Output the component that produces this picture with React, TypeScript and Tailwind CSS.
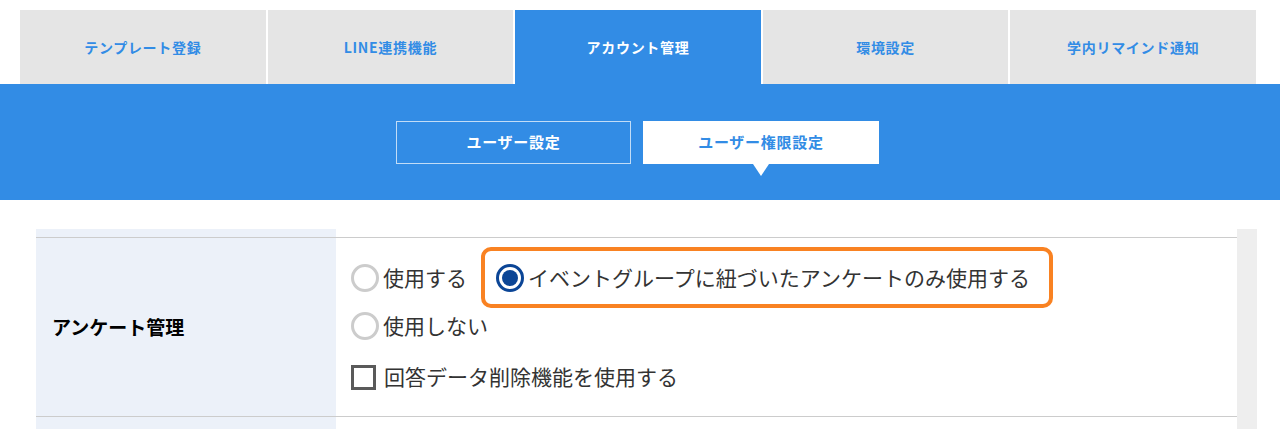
const TABS = ["テンプレート登録", "LINE連携機能", "アカウント管理", "環境設定", "学内リマインド通知"];
const ACTIVE_TAB = 2;

function Radio({ checked }: { checked?: boolean }) {
  if (checked) {
    return (
      <span className="flex h-[28px] w-[28px] shrink-0 items-center justify-center rounded-full border-[3px] border-[#0b4596] bg-white">
        <span className="h-[16px] w-[16px] rounded-full bg-[#0b4596]" />
      </span>
    );
  }
  return <span className="h-[28px] w-[28px] shrink-0 rounded-full border-[3px] border-[#cccccc] bg-white" />;
}

export default function App() {
  return (
    <div
      className="h-[444px] w-[1280px] overflow-hidden bg-white"
      style={{ fontFamily: '"Noto Sans CJK JP", "Noto Sans", sans-serif' }}
    >
      {/* main tabs */}
      <div className="grid h-[84px] grid-cols-5 gap-[2px] pl-[20px] pr-[24px] pt-[10px]">
        {TABS.map((t, i) => (
          <div
            key={t}
            className={
              i === ACTIVE_TAB
                ? "flex items-center justify-center bg-[#328ce5] text-[14px] font-bold tracking-[0.05em] text-white"
                : "flex items-center justify-center bg-[#e5e5e5] text-[14px] font-bold tracking-[0.05em] text-[#328ce5]"
            }
          >
            {t}
          </div>
        ))}
      </div>

      {/* sub tabs */}
      <div className="flex h-[116px] justify-center gap-[12px] bg-[#328ce5] pr-[5px] pt-[37px]">
        <div className="flex h-[43px] w-[235px] items-center justify-center border border-white/70 text-[15px] font-bold tracking-[0.05em] text-white">
          ユーザー設定
        </div>
        <div className="relative flex h-[43px] w-[236px] items-center justify-center bg-white text-[15px] font-bold tracking-[0.05em] text-[#328ce5]">
          ユーザー権限設定
          <span className="absolute left-1/2 top-full -translate-x-1/2 border-x-[8px] border-t-[12px] border-x-transparent border-t-white" />
        </div>
      </div>

      {/* settings table */}
      <div className="ml-[36px] mr-[23px] mt-[29px] flex h-[200px]">
        <div className="flex-1 bg-[linear-gradient(to_right,#ecf1f9_300px,#ffffff_300px)] pb-[12px] pt-[8px]">
          <div className="flex h-[180px] border-y border-[#cccccc]">
            <div className="flex w-[300px] items-center pl-[16px] text-[19px] font-bold text-black">
              アンケート管理
            </div>
            <div className="flex-1 pl-[15px] pt-[9px] text-[21px] text-[#333333]">
              <div className="flex h-[61px] items-center">
                <label className="flex items-center gap-[4px]">
                  <Radio />
                  <span>使用する</span>
                </label>
                <div className="ml-[14px] flex h-[61px] items-center gap-[4px] rounded-[10px] border-4 border-[#f98222] pl-[11px] pr-[19px]">
                  <Radio checked />
                  <span>イベントグループに紐づいたアンケートのみ使用する</span>
                </div>
              </div>
              <label className="flex h-[36px] items-center gap-[4px]">
                <Radio />
                <span>使用しない</span>
              </label>
              <label className="mt-[15px] flex h-[36px] items-center gap-[8px]">
                <span className="h-[25px] w-[25px] shrink-0 border-[3px] border-[#5a5a5a] bg-white" />
                <span>回答データ削除機能を使用する</span>
              </label>
            </div>
          </div>
        </div>
        <div className="w-[20px] bg-[#eeeeee]" />
      </div>
    </div>
  );
}
